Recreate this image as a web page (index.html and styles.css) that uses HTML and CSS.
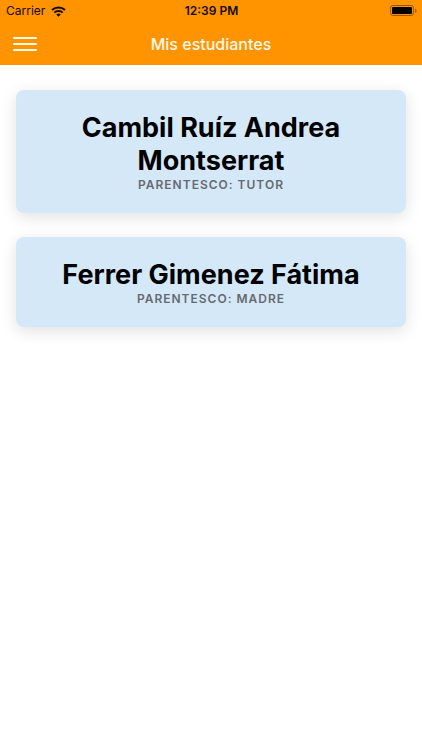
FILE: index.html
```html
<!DOCTYPE html>
<html lang="es">
<head>
<meta charset="utf-8">
<meta name="viewport" content="width=device-width, initial-scale=1">
<title>Mis estudiantes</title>
<link rel="stylesheet" href="styles.css">
</head>
<body>
<header class="header">
  <div class="status">
    <div class="carrier">
      <span>Carrier</span>
      <svg class="wifi" viewBox="0 0 15 11" aria-hidden="true">
        <path d="M1 4a9.400 9.400 0 0 1 13 0" />
        <path d="M3.300 6.600a6 6 0 0 1 8.400 0" />
        <path class="solid" d="M7.500 10.800 5.300 8.600a3.200 3.200 0 0 1 4.400 0Z" />
      </svg>
    </div>
    <time class="clock">12:39 PM</time>
    <svg class="battery" viewBox="0 0 27 12" aria-hidden="true">
      <rect class="case" x="0.500" y="0.500" width="23" height="10" rx="2.500" />
      <rect x="2" y="2" width="20" height="7" rx="1" />
      <path class="tip" d="M25 4a1.700 1.700 0 0 1 0 3.400Z" />
    </svg>
  </div>
  <div class="toolbar">
    <button class="menu" type="button" aria-label="Menú">
      <svg viewBox="0 0 24 16" aria-hidden="true"><path d="M1 2h22M1 8h22M1 14h22" /></svg>
    </button>
    <h1 class="title">Mis estudiantes</h1>
  </div>
</header>
<main class="students">
  <article class="card">
    <h2 class="name">Cambil Ruíz Andrea Montserrat</h2>
    <p class="relation">Parentesco: Tutor</p>
  </article>
  <article class="card">
    <h2 class="name">Ferrer Gimenez Fátima</h2>
    <p class="relation">Parentesco: Madre</p>
  </article>
</main>
</body>
</html>
```
FILE: styles.css
```css
* {
  box-sizing: border-box;
}

body {
  margin: 0;
  background: #fff;
  color: #000;
  font-family: Inter, "Liberation Sans", sans-serif;
}

h1,
h2,
p {
  margin: 0;
}

.header {
  background: #ff9300;
}

.status {
  display: grid;
  grid-template-columns: 1fr auto 1fr;
  align-items: center;
  height: 22px;
  padding: 0 5px 0 6px;
  color: #140b00;
  font-size: 12px;
  line-height: 16px;
}

.carrier {
  display: flex;
  align-items: center;
  gap: 6px;
}

.wifi {
  width: 15px;
  height: 11px;
  fill: none;
  stroke: #140b00;
  stroke-width: 2;
}

.wifi .solid {
  fill: #140b00;
  stroke: none;
}

.clock {
  font-weight: 600;
}

.battery {
  width: 27px;
  height: 12px;
  justify-self: end;
}

.battery .case {
  fill: none;
  stroke: #000;
  stroke-opacity: 0.4;
}

.battery .tip {
  fill-opacity: 0.4;
}

.toolbar {
  display: grid;
  grid-template-columns: 24px 1fr 24px;
  align-items: center;
  height: 43px;
  padding: 0 13px;
}

.menu {
  display: flex;
  padding: 0;
  border: 0;
  background: none;
  cursor: pointer;
}

.menu svg {
  width: 24px;
  height: 16px;
  fill: none;
  stroke: #fff9ec;
  stroke-width: 2;
  stroke-linecap: round;
}

.title {
  color: #fff9ec;
  font-size: 16px;
  font-weight: 500;
  line-height: 24px;
  text-align: center;
}

.students {
  display: grid;
  gap: 24px;
  padding: 25px 16px;
}

.card {
  padding: 21px 16px;
  border-radius: 8px;
  background: #d4e8f8;
  box-shadow: 0 4px 16px rgba(0, 0, 0, 0.12);
  text-align: center;
}

.name {
  font-size: 27px;
  font-weight: 700;
  line-height: 33px;
}

.relation {
  color: #666a6e;
  font-size: 12px;
  font-weight: 600;
  letter-spacing: 1px;
  line-height: 15px;
  text-transform: uppercase;
}
```
